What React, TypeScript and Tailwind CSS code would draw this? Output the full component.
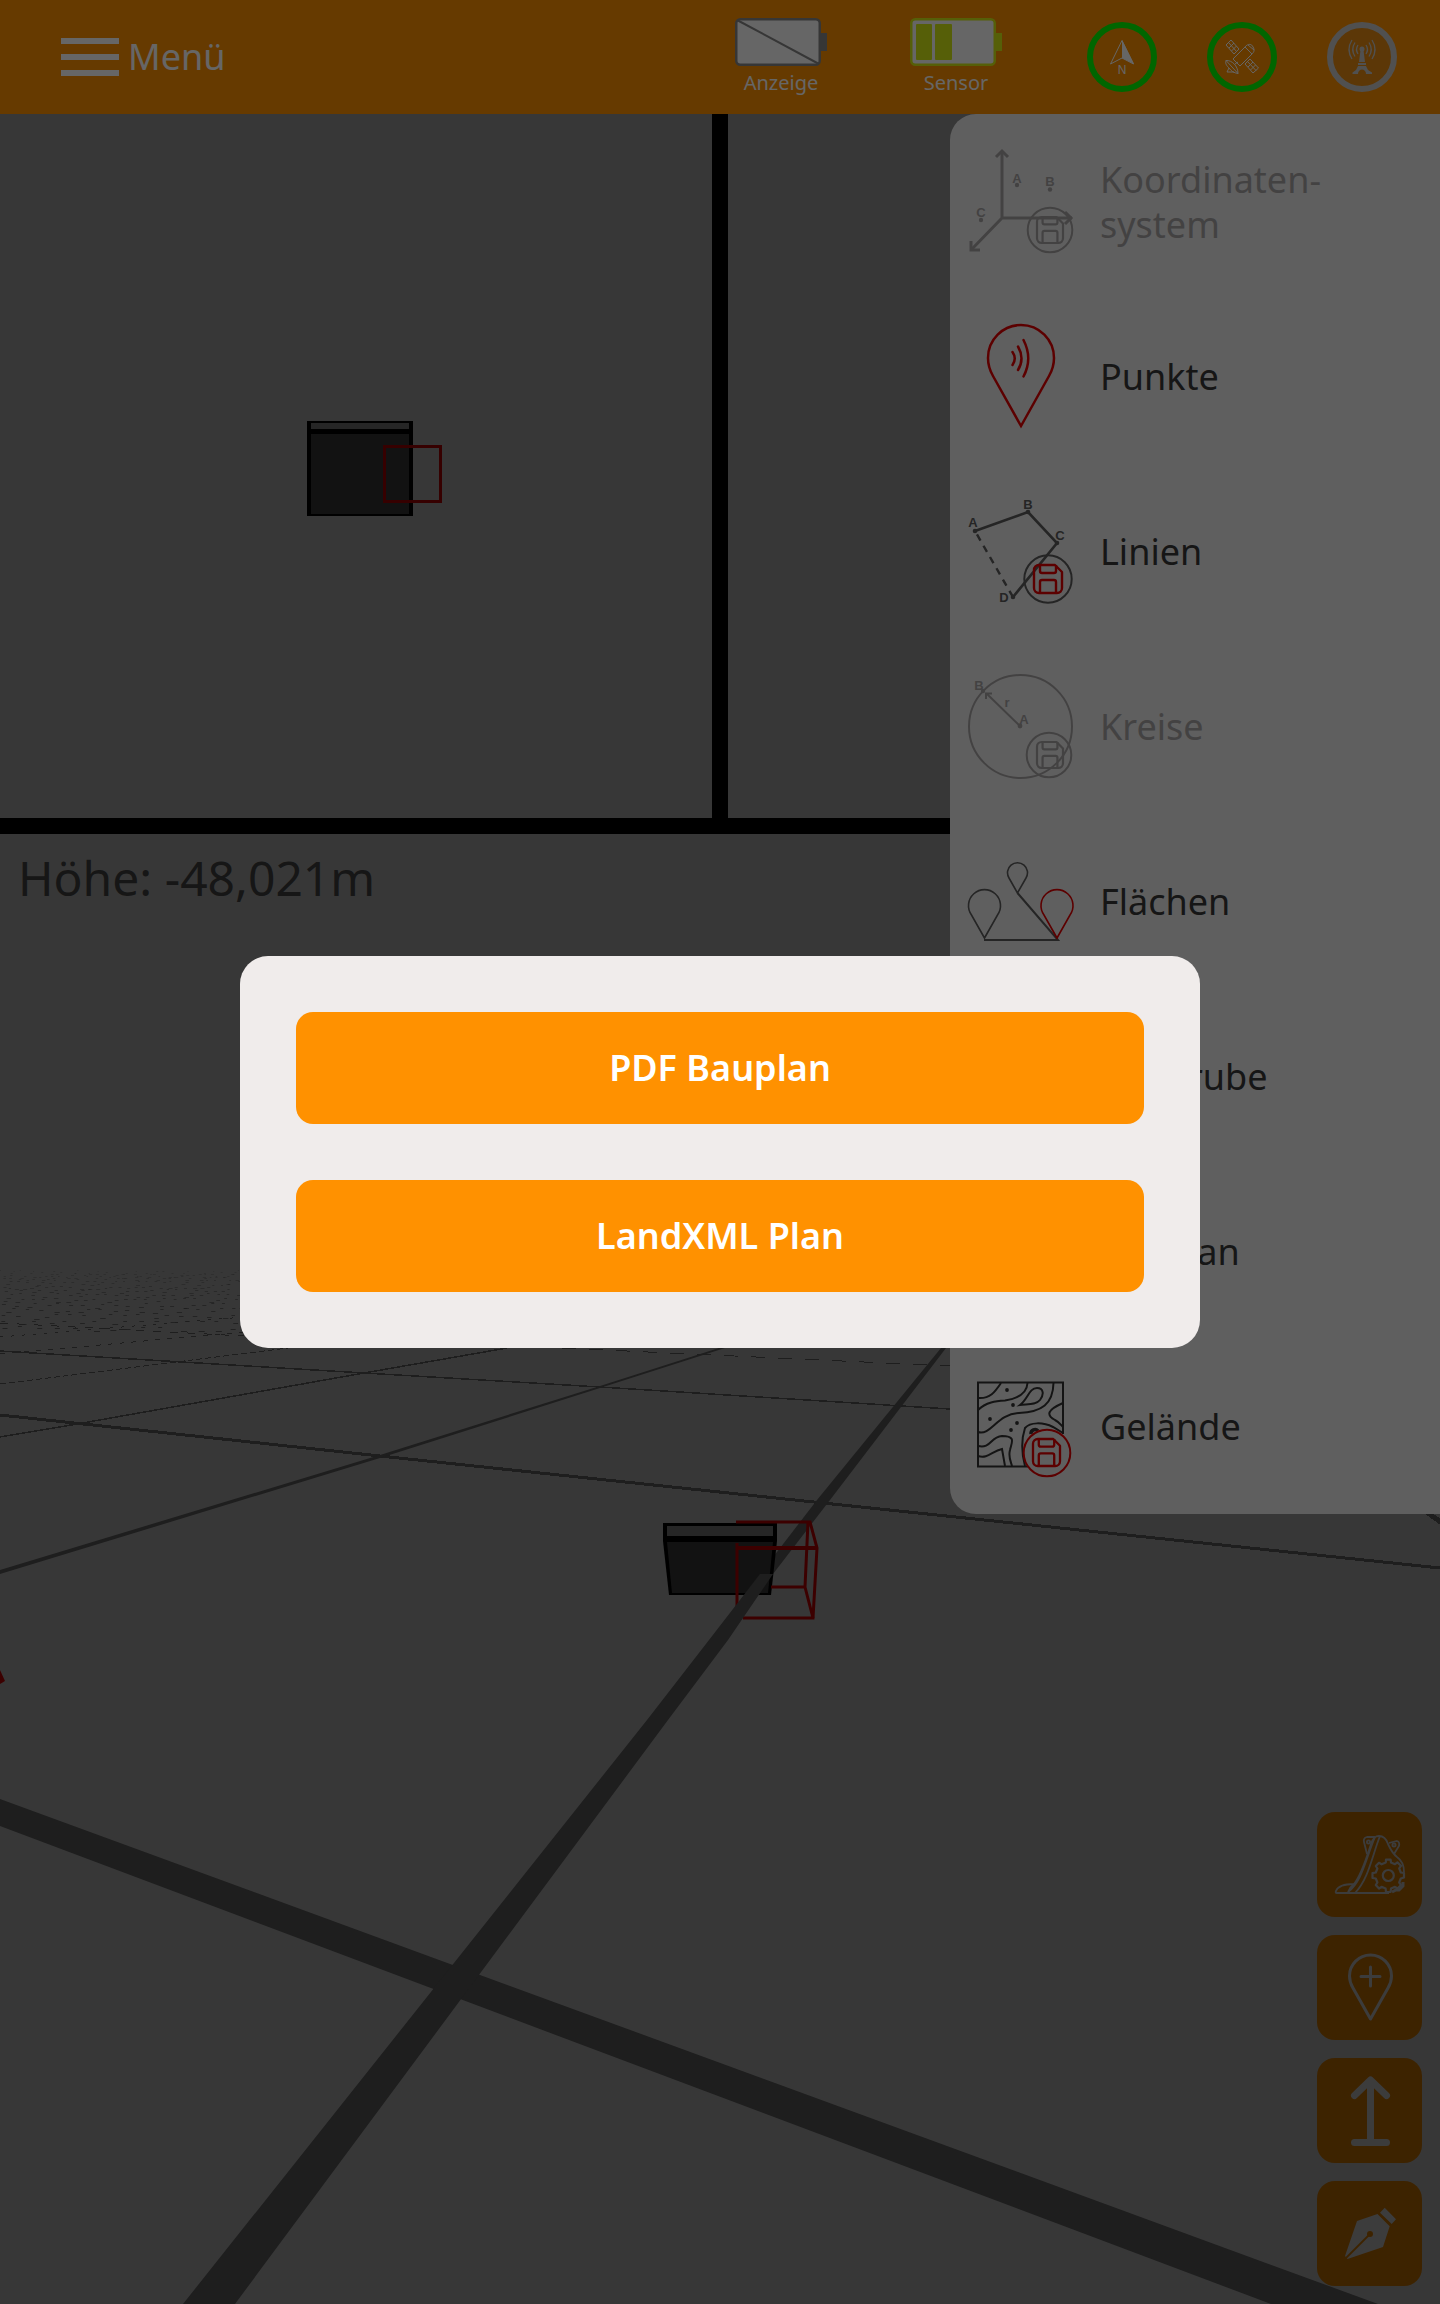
import React from "react";

type IconProps = { className?: string };

const pinPath =
  "M53 102 L25 52 C21 45 20 40 20 34 A33 33 0 0 1 86 34 C86 40 85 45 81 52 Z";

function Floppy({ x, y, size = 28 }: { x: number; y: number; size?: number }) {
  return (
    <g transform={`translate(${x} ${y}) scale(${size / 28})`} strokeWidth={2.4} strokeLinejoin="round">
      <path d="M5 0 H21 L28 7 V23 A5 5 0 0 1 23 28 H5 A5 5 0 0 1 0 23 V5 A5 5 0 0 1 5 0 Z" />
      <path d="M6 0 V6 A2 2 0 0 0 8 8 H20 A2 2 0 0 0 22 6 V0" />
      <path d="M6 28 V17 A2 2 0 0 1 8 15 H20 A2 2 0 0 1 22 17 V28" />
    </g>
  );
}

function Glyph({ x, y, children, size = 13 }: { x: number; y: number; children: string; size?: number }) {
  return (
    <text
      x={x}
      y={y + size * 0.36}
      textAnchor="middle"
      fontSize={size}
      fontFamily="Liberation Sans, sans-serif"
      fontWeight={700}
      fill="currentColor"
      stroke="none"
    >
      {children}
    </text>
  );
}

function RowIcon({ children, className = "" }: { children: React.ReactNode; className?: string }) {
  return (
    <svg
      viewBox="0 0 105 105"
      aria-hidden="true"
      className={`size-[105px] shrink-0 overflow-visible ${className}`}
      fill="none"
      stroke="currentColor"
      strokeWidth={2}
    >
      {children}
    </svg>
  );
}

const CoordinateIcon = () => (
  <RowIcon>
    <g strokeWidth={3}>
      <path d="M34 2 V69 H104 M34 69 L3 101" />
      <path d="M28 8 L34 2 L40 8 M97 63 L103 69 L97 75 M3 92 V101 H12" />
    </g>
    <Glyph x={49} y={29}>A</Glyph>
    <Glyph x={82} y={32}>B</Glyph>
    <Glyph x={13} y={63}>C</Glyph>
    <g fill="currentColor" stroke="none">
      <circle cx={49} cy={36} r={2.2} />
      <circle cx={82} cy={40.5} r={2.2} />
      <circle cx={13} cy={71} r={2.2} />
    </g>
    <circle cx={82} cy={81} r={22.3} />
    <Floppy x={69} y={68} size={26} />
  </RowIcon>
);

const PointIcon = () => (
  <RowIcon className="text-[#e60000]">
    <path d={pinPath} strokeWidth={2.5} />
    <path d="M44.500 28 Q49 34.500 44.500 41 M50 22.500 Q57 34.500 50 46 M55.500 16 Q65 34.500 55.500 52.500" strokeWidth={2.5} strokeLinecap="round" />
  </RowIcon>
);

const LinesIcon = () => (
  <RowIcon className="text-[#5c5c5c]">
    <path d="M7 32 L60 13 L89 44 L45 98" strokeWidth={2.6} />
    <path d="M7 32 L45 98" strokeDasharray="7 6" strokeDashoffset={-4} strokeWidth={2.4} />
    <g fill="currentColor" stroke="none">
      <circle cx={7} cy={32} r={2.3} />
      <circle cx={60} cy={13} r={2.3} />
      <circle cx={89} cy={44} r={2.3} />
      <circle cx={45} cy={98} r={2.3} />
    </g>
    <Glyph x={5} y={23}>A</Glyph>
    <Glyph x={60} y={5}>B</Glyph>
    <Glyph x={92} y={36}>C</Glyph>
    <Glyph x={36} y={98}>D</Glyph>
    <circle cx={80} cy={80} r={23.7} />
    <g className="text-[#e60000]" stroke="currentColor">
      <Floppy x={66} y={66} />
    </g>
  </RowIcon>
);

const CircleIcon = () => (
  <RowIcon>
    <circle cx={52.500} cy={52.500} r={51.500} />
    <path d="M52 52 L18 19 M18 25 V19.500 H24" />
    <circle cx={52} cy={52} r={2.4} fill="currentColor" stroke="none" />
    <circle cx={15} cy={17} r={2.2} fill="currentColor" stroke="none" />
    <Glyph x={11} y={11}>B</Glyph>
    <Glyph x={39} y={28}>r</Glyph>
    <Glyph x={56} y={45}>A</Glyph>
    <circle cx={81} cy={81} r={22.300} />
    <Floppy x={69} y={68} size={26} />
  </RowIcon>
);

const AreaIcon = () => (
  <RowIcon className="text-[#5c5c5c]">
    <g strokeWidth={1.600}>
      <path d="M16.500 89 L3.500 66 A16 16 0 1 1 29.500 66 Z" />
      <path d="M49.500 44 L41 29 A10 10 0 1 1 58 29 Z" />
      <path d="M16 91 H90 L49.500 44" strokeWidth={2} />
      <path d="M89 89 L76 66 A16 16 0 1 1 102 66 Z" className="text-[#e60000]" stroke="currentColor" />
    </g>
  </RowIcon>
);

const PitIcon = () => (
  <RowIcon className="text-[#3a3a3a]">
    <path d="M2 30 H24 L36 76 H70 L82 30 H103" />
  </RowIcon>
);

const PlanIcon = () => (
  <RowIcon className="text-[#3a3a3a]">
    <path d="M18 8 H68 L88 28 V97 H18 Z M68 8 V28 H88 M30 46 H76 M30 60 H76 M30 74 H60" />
  </RowIcon>
);

const TerrainIcon = () => (
  <RowIcon className="text-[#323232]">
    <path d="M95 60 V8.500 H10 V92.500 H60" />
    <path d="M10 24 C22 25 27 18 33 9 M10 36 C18 28 28 27 37 26.500 C53 24 59 18 59.500 9 M52 31 C60 25 61 14 69 14 C76 14 76 21 72 26 C68 31 60 30 52 31 Z M10 58 C23 62 29 40 51 39 C74 38 85 30 85.500 9 M95 29 C79 36 78 41 87 46 C91 48 93 51 95 53 M10 72 C23 75 22 63 34 62 C48 62 44 68 42 76 C40 83 43 88 44 92 M10 82 C20 85 24 77 34 75 L37 92 M57 92 C52 73 55 60 57 54 C62 48 75 48 85 53 L95 59" />
    <path d="M63 60 A4 4 0 0 1 70 57" strokeWidth={3.500} />
    <g fill="currentColor" stroke="none">
      <circle cx={39} cy={16} r={1.900} />
      <circle cx={45} cy={31} r={1.900} />
      <circle cx={22} cy={45} r={1.900} />
      <circle cx={49} cy={49} r={1.900} />
      <circle cx={43} cy={56} r={1.900} />
    </g>
    <g className="text-[#e60000]" stroke="currentColor">
      <circle cx={79} cy={79} r={23.300} />
      <Floppy x={65} y={65} size={27} />
    </g>
  </RowIcon>
);

const panelItems: { label: React.ReactNode; key: string; icon: () => React.JSX.Element; disabled?: boolean }[] = [
  { key: "coord", label: <>Koordinaten-<br />system</>, icon: CoordinateIcon, disabled: true },
  { key: "points", label: "Punkte", icon: PointIcon },
  { key: "lines", label: "Linien", icon: LinesIcon },
  { key: "circles", label: "Kreise", icon: CircleIcon, disabled: true },
  { key: "areas", label: "Flächen", icon: AreaIcon },
  { key: "pit", label: "Baugrube", icon: PitIcon },
  { key: "plan", label: "Bauplan", icon: PlanIcon },
  { key: "terrain", label: "Gelände", icon: TerrainIcon },
];

function Battery({ label, level }: { label: string; level: "none" | "half" }) {
  const on = level === "half";
  return (
    <div className="flex w-[92px] flex-col items-center">
      <svg viewBox="0 0 92 48" aria-hidden="true" className={on ? "w-full text-[#d6ee14]" : "w-full text-[#878787]"}>
        <rect x={1.250} y={1.250} width={83.500} height={45.500} rx={4} fill="white" stroke="currentColor" strokeWidth={2.500} />
        <rect x={86} y={15} width={6} height={18} fill="currentColor" />
        {on ? (
          <g fill="currentColor">
            <rect x={6} y={6} width={16} height={36} rx={1} />
            <rect x={25} y={6} width={17} height={36} rx={1} />
          </g>
        ) : (
          <path d="M2 2 L84 46" stroke="currentColor" strokeWidth={2} />
        )}
      </svg>
      <span className="mt-1 text-[20px] leading-[26px] text-white">{label}</span>
    </div>
  );
}

function NorthIcon() {
  return (
    <svg viewBox="0 0 70 70" aria-hidden="true" className="size-[70px]">
      <circle cx={35} cy={35} r={32} fill="none" stroke="#00ff00" strokeWidth={6} />
      <path d="M35 18.500 L23.500 42 L35 36 L46.500 42 Z" fill="none" stroke="white" />
      <path d="M35 18 L47 42 L35 36 Z" fill="white" />
      <text x={35} y={52} textAnchor="middle" fontSize={12} fontFamily="Liberation Sans, sans-serif" fill="white">N</text>
    </svg>
  );
}

function SatelliteIcon() {
  return (
    <svg viewBox="0 0 70 70" aria-hidden="true" className="size-[70px]">
      <circle cx={35} cy={35} r={32} fill="none" stroke="#00ff00" strokeWidth={6} />
      <g fill="none" stroke="white" strokeWidth={1}>
        <path d="M26 37 L38 25 L45 32 L33 44 Z M38 25 C41 21 45 22 46 25 C48 28 47 30 45 32 M41 23 L47 28" />
        <path d="M19 23 L24 18 L32 27 L27 32 Z M21.500 20.500 L29.500 29.500 M22 26 L27 21 M24.500 29 L29.500 24" />
        <path d="M38 42 L43 37 L51.500 46 L46 51 Z M40.500 39.500 L49 48.500 M41 45 L46 40 M43.500 48 L48.500 43" />
        <path d="M19 38.500 C25 38 31 44 31 51.500 L19 38.500 C18 42 20 44 22 46 L20 50 M22 46 C24 49 27 51 31 51.500 M28 42 L31 40 M20 50 L27 50" />
      </g>
    </svg>
  );
}

function AntennaIcon() {
  return (
    <svg viewBox="0 0 70 70" aria-hidden="true" className="size-[70px] text-[#c8c8c8]">
      <circle cx={35} cy={35} r={32} fill="#e58a12" stroke="currentColor" strokeWidth={6} />
      <g fill="none" stroke="currentColor" strokeWidth={1.300}>
        <path d="M31 23 Q28 27.500 31 32 M28 20.500 Q23.500 27.500 28 34.500 M25 18 Q19 27.500 25 37" />
        <path d="M39 23 Q42 27.500 39 32 M42 20.500 Q46.500 27.500 42 34.500 M45 18 Q51 27.500 45 37" />
      </g>
      <g fill="currentColor">
        <circle cx={35} cy={27} r={2.500} />
        <path d="M33.500 28 H36.500 L38 40 H32 Z M31 41 H39 V43 H31 Z M31 44 H39 L41 48 L45 50.500 V52 H39 C39 46 31 46 31 52 H25.500 V50.500 L29 48 Z" />
      </g>
    </svg>
  );
}

const toolIcon = "size-full text-[#979797]";

const ExcavatorIcon = () => (
  <svg viewBox="0 0 105 105" aria-hidden="true" className={toolIcon} fill="none" stroke="currentColor" strokeWidth={1.800}>
    <path d="M72 81 H20 Q18 81 19 79 C21 74 29 72 37 72 C45 62 50 44 54 32 C56 26 58 24 62 24 C66 24 69 26 71 32 C74 38 75 41 80 45 Q87 50 87 60" />
    <path d="M31 80 C45 70 49 46 58 25 M38 81 C52 66 55 44 63 24 M37 72 Q33 75 31 80" />
    <path d="M50 42 L47 30 Q46 26 50 25 H58 M72 31 L80 29 Q83 30 82 34 L77 42" />
    <circle cx={51.500} cy={30} r={1.600} />
    <circle cx={77} cy={33} r={1.600} />
    <path d="M68.800 50.500 L69 47.600 H73.600 L74 50.500 L78 52.200 L80.400 50.400 L84 53.800 L82.200 56.300 L83.800 60.500 L87 61 V65.500 L83.800 66.500 L82.200 70.500 L84 73 L80.600 76.500 L78 74.800 L74 76.500 L73.600 80 H69 L68.600 76.500 L64.500 74.800 L62 76.500 L58.800 73 L60.400 70.500 L58.800 66.500 L55.500 66 V61.200 L58.800 60.500 L60.400 56.500 L58.800 54 L62 50.800 L64.600 52.300 Z" fill="#995700" strokeWidth={2.200} strokeLinejoin="round" />
    <circle cx={71.300} cy={63.500} r={5.500} strokeWidth={2.200} />
    <path d="M75 80 L79 78 L82 78 L86 74 V70" strokeWidth={3} />
  </svg>
);

const AddPointIcon = () => (
  <svg viewBox="0 0 105 105" aria-hidden="true" className={toolIcon} fill="none" stroke="currentColor" strokeWidth={3} strokeLinecap="round" strokeLinejoin="round">
    <path d="M53.500 84 L36 53 C33 48 32.500 45 32.500 41 A21 21 0 0 1 74.500 41 C74.500 45 74 48 71 53 Z" />
    <path d="M53.500 32 V51 M44 41.500 H63" />
  </svg>
);

const RaiseIcon = () => (
  <svg viewBox="0 0 105 105" aria-hidden="true" className={toolIcon} fill="none" stroke="currentColor" strokeWidth={7} strokeLinecap="round" strokeLinejoin="round">
    <path d="M53.500 83 V23 M37.500 37.500 L53.500 22 L69.500 37.500 M37.500 84.500 H69.500" />
  </svg>
);

const PenIcon = () => (
  <svg viewBox="0 0 105 105" aria-hidden="true" className={toolIcon} fill="currentColor">
    <path d="M28 75 L40 40 L60.500 33 L72.700 45.300 L66 66 L30.500 78 Z M67.700 26.700 L79 38.300 L74.700 43 L63 31.700 Z" />
    <path d="M28 78 L53 53" stroke="#995700" strokeWidth={1.800} />
    <circle cx={53} cy={53} r={3} fill="#995700" />
  </svg>
);

const tools = [
  { label: "Bagger einstellen", icon: ExcavatorIcon },
  { label: "Punkt hinzufügen", icon: AddPointIcon },
  { label: "Höhe setzen", icon: RaiseIcon },
  { label: "Zeichnen", icon: PenIcon },
];

function TopView() {
  return (
    <svg viewBox="0 0 712 704" preserveAspectRatio="xMidYMid slice" className="size-full" aria-hidden="true">
      <rect x={307} y={307} width={106} height={95} fill="#000" />
      <rect x={311} y={309} width={98} height={6} fill="#5f5f5f" />
      <rect x={311} y={320} width={98} height={80} fill="#2f2f2f" />
      <rect x={384.500} y={332.500} width={56} height={55} fill="none" stroke="#870000" strokeWidth={3} />
    </svg>
  );
}

/* Far grid cells shrink to short dashes close to the horizon. */
const specks = Array.from({ length: 13 }, (_, row) => {
  const y = 1270 + row * 3 + Math.floor((row * row) / 7);
  const count = 38 - row * 2;
  return Array.from({ length: count }, (_, i) => {
    const r = Math.abs(Math.sin(row * 91.7 + i * 37.3) * 1000) % 1;
    const x = (i * 244) / count + r * 7;
    return { x, y: y + Math.round(r * 5), w: 1 + Math.round(r * 2) + row / 4, o: 0.3 + row * 0.05 };
  });
}).flat();

function PerspectiveView() {
  return (
    <svg viewBox="0 834 1440 1470" preserveAspectRatio="xMidYMid slice" className="absolute inset-0 size-full" aria-hidden="true">
      <g fill="#4b4b4b">
        {specks.map((s, i) => (
          <rect key={i} x={s.x} y={s.y} width={s.w} height={1} opacity={s.o} />
        ))}
      </g>
      <g fill="none" stroke="#4b4b4b" shapeRendering="crispEdges">
        <g strokeWidth={1}>
          <path d="M0 1337 L244 1317" strokeDasharray="3 8" />
          <path d="M0 1323 L244 1336" strokeDasharray="8 9" />
          <path d="M0 1354 L244 1332" strokeDasharray="5 7" />
          <path d="M0 1384 L184 1361 L288 1348" strokeDasharray="6 3" />
          <path d="M562 1348 L950 1366" strokeDasharray="14 13" />
          <path d="M0 1351 L364 1373 L600 1387 L950 1409" strokeWidth={1.500} />
          <path d="M0 1437 L77 1424 L364 1373 L507 1348" strokeWidth={1.500} />
        </g>
        <path d="M0 1415 L380 1456 L823 1503 L1440 1568" strokeWidth={3} />
        <path d="M1424 1510 L1442 1523" strokeWidth={5} />
      </g>
      <g fill="#4b4b4b">
        <path d="M0 1570 L380 1455 L600 1386 L722 1347 L725 1348 L600 1388 L380 1458 L0 1574 Z" />
        <path d="M941 1348 H946 L830 1500 L773 1574 H760 L817 1500 Z" />
        <path d="M0 1799 L1378 2304 H1271 L0 1826 Z" />
      </g>
      <path d="M663 1523 H777 V1541 L771 1595 H669 L663 1541 Z" fill="#000" />
      <path d="M667 1526 H773 V1536 H667 Z" fill="#5f5f5f" />
      <path d="M667 1542 H773 L768 1593 H672 Z" fill="#2f2f2f" />
      <g fill="none" stroke="#960000" strokeWidth={3}>
        <path d="M736 1522 H810 L817 1548 L813 1618 H743" />
        <path d="M737 1548 H817" strokeWidth={4} />
        <path d="M737 1543 V1606 M808 1522 L805 1587 H771 M805 1587 L813 1618" />
      </g>
      <path d="M760 1574 H773 L728 1640 L668 1720 L235 2304 H183 L647 1720 L709 1640 Z" fill="#4b4b4b" />
      <path d="M0 1670 L5 1681 L0 1684 Z" fill="#960000" />
    </svg>
  );
}

export default function App() {
  return (
    <div className="relative flex min-h-screen flex-col overflow-hidden bg-[#8a8a8a] font-['Noto_Sans',sans-serif] text-[#373737]">
      <header className="flex h-[114px] shrink-0 items-center justify-between bg-[#ff9100] pr-[43px] pl-[61px]">
        <button type="button" className="flex items-center gap-[9px] text-[36px] leading-[48px] text-white">
          <span className="flex w-[58px] flex-col gap-[10px]" aria-hidden="true">
            <span className="h-[6px] bg-white" />
            <span className="h-[6px] bg-white" />
            <span className="h-[6px] bg-white" />
          </span>
          Menü
        </button>
        <div className="flex items-center">
          <div className="flex gap-[83px] pr-[85px]">
            <Battery label="Anzeige" level="none" />
            <Battery label="Sensor" level="half" />
          </div>
          <div className="flex gap-[50px]">
            <NorthIcon />
            <SatelliteIcon />
            <AntennaIcon />
          </div>
        </div>
      </header>

      <main className="relative flex flex-1 flex-col">
        <div className="flex h-[704px] shrink-0">
          <section className="flex-1" aria-label="Draufsicht">
            <TopView />
          </section>
          <div className="w-4 bg-black" />
          <section className="flex-1" aria-label="Seitenansicht" />
        </div>
        <div className="h-4 shrink-0 bg-black" />
        <section className="relative flex-1" aria-label="Perspektive">
          <PerspectiveView />
          <p className="relative px-[18px] pt-[12px] text-[48px] leading-[64px]">Höhe: -48,021m</p>
        </section>

        <nav className="absolute top-0 right-0 w-[490px] overflow-hidden rounded-l-[26px] bg-[#eeeeee]" aria-label="Elemente">
          <ul>
            {panelItems.map(({ key, label, icon: Icon, disabled }) => (
              <li key={key}>
                <button
                  type="button"
                  disabled={disabled}
                  className={
                    disabled
                      ? "flex h-[175px] w-full items-center gap-[27px] pl-[18px] text-left text-[36px] leading-[45px] text-[#a8a5a6]"
                      : "flex h-[175px] w-full items-center gap-[27px] pl-[18px] text-left text-[36px] leading-[45px] text-[#373737]"
                  }
                >
                  <Icon />
                  <span>{label}</span>
                </button>
              </li>
            ))}
          </ul>
        </nav>

        <div className="absolute right-[18px] bottom-[18px] flex flex-col gap-[18px]">
          {tools.map(({ label, icon: Icon }) => (
            <button key={label} type="button" aria-label={label} className="size-[105px] rounded-[18px] bg-[#995700]">
              <Icon />
            </button>
          ))}
        </div>
      </main>

      <div className="absolute inset-0 flex items-center justify-center bg-black/60">
        <div role="dialog" aria-modal="true" aria-label="Plan wählen" className="flex w-2/3 flex-col gap-14 rounded-[28px] bg-[#f0eceb] p-14">
          <button type="button" className="h-28 rounded-[17px] bg-[#ff9100] text-[36px] font-semibold text-white">
            PDF Bauplan
          </button>
          <button type="button" className="h-28 rounded-[17px] bg-[#ff9100] text-[36px] font-semibold text-white">
            LandXML Plan
          </button>
        </div>
      </div>
    </div>
  );
}
